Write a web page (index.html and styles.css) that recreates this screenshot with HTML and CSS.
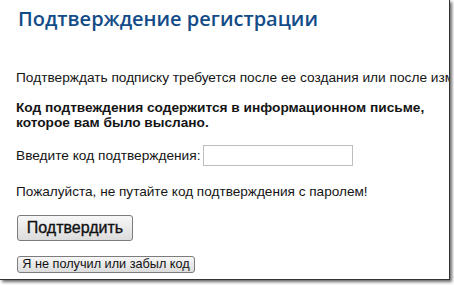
FILE: index.html
```html
<!DOCTYPE html>
<html lang="ru">
<head>
<meta charset="utf-8">
<link rel="stylesheet" href="styles.css">
</head>
<body>
<div class="frame">
  <div class="content">
    <h1 class="title">Подтверждение регистрации</h1>
    <p class="intro">Подтверждать подписку требуется после ее создания или после изменения адреса электронной почты.</p>
    <p class="notice">Код подтвеждения содержится в информационном письме,<br>которое вам было выслано.</p>
    <div class="code-row">
      <label class="code-label" for="code">Введите код подтверждения:</label>
      <input class="code-input" id="code" type="text">
    </div>
    <p class="warning">Пожалуйста, не путайте код подтверждения с паролем!</p>
    <button class="btn btn-main" type="button">Подтвердить</button>
    <button class="btn btn-small" type="button">Я не получил или забыл код</button>
  </div>
</div>
</body>
</html>
```
FILE: styles.css
```css
html, body {
  margin: 0;
  padding: 0;
  background: #ffffff;
}
body {
  width: 454px;
  height: 285px;
  overflow: hidden;
}
.frame {
  width: 449px;
  height: 279px;
  background: #ffffff;
  border-right: 1px solid #333333;
  border-bottom: 1px solid #333333;
  box-shadow: 2px 2px 3px rgba(0, 0, 0, 0.6);
  overflow: hidden;
}
.content {
  padding: 0 0 0 16px;
  display: flex;
  flex-direction: column;
  align-items: flex-start;
  font-family: "Liberation Sans", Arial, sans-serif;
  font-size: 13.7px;
  color: #151515;
}
.title {
  margin: 7px 0 0 2px;
  font-family: "Open Sans", "DejaVu Sans", sans-serif;
  font-weight: 600;
  font-size: 20px;
  line-height: 24px;
  color: #134c87;
  white-space: nowrap;
}
.intro {
  margin: 39px 0 0 0;
  line-height: 16px;
  white-space: nowrap;
}
.notice {
  margin: 14px 0 0 0;
  font-weight: bold;
  line-height: 15px;
}
.code-row {
  margin-top: 15px;
  display: flex;
  align-items: center;
  gap: 3px;
}
.code-input {
  width: 146px;
  height: 17px;
  margin: 0;
  padding: 1px;
  border: 1px solid #bdbdbd;
  font: inherit;
}
.warning {
  margin: 18px 0 0 0;
  line-height: 16px;
  font-size: 13.6px;
}
.btn {
  margin: 0 0 0 1px;
  font-family: "Liberation Sans", Arial, sans-serif;
  color: #111111;
  border: 1px solid #7c7c7c;
  border-radius: 3px;
  background: linear-gradient(#f7f7f7, #dcdcdc);
  cursor: pointer;
}
.btn-main {
  margin-top: 15px;
  width: 116px;
  height: 26px;
  padding: 0;
  font-size: 16px;
  -webkit-text-stroke: 0.35px #111111;
}
.btn-small {
  margin-top: 15px;
  width: 178px;
  height: 17px;
  padding: 0;
  font-size: 12.7px;
  line-height: 15px;
}
```
